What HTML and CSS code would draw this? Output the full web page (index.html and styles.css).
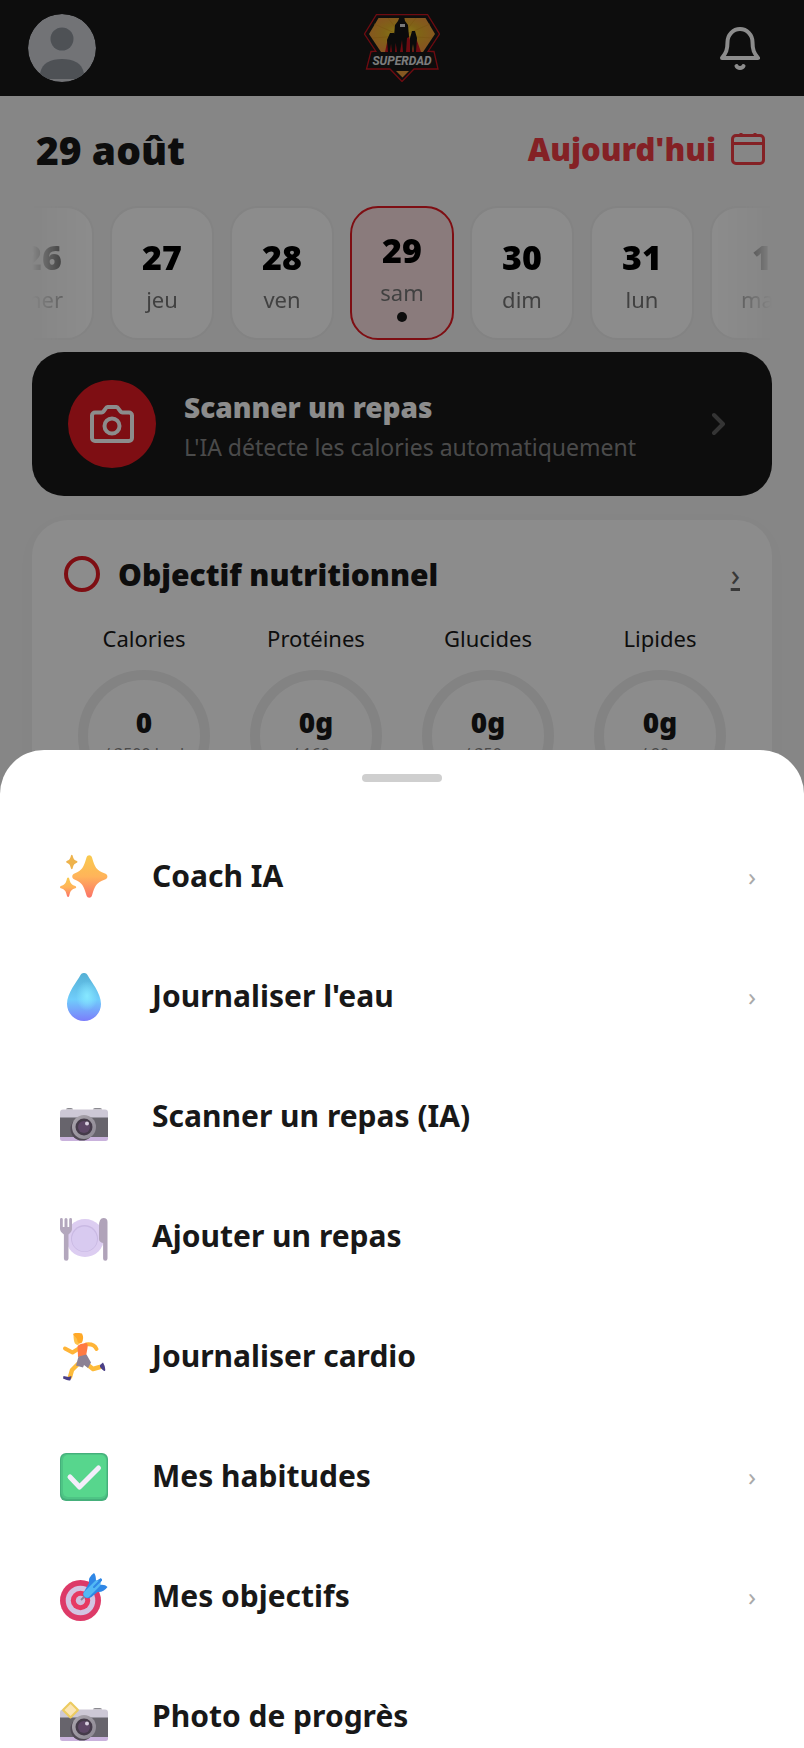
FILE: index.html
```html
<!DOCTYPE html>
<html lang="fr">
<head>
    <meta charset="UTF-8">
    <meta name="viewport" content="width=device-width, initial-scale=1.0">
    <title>SuperDad</title>
    <link rel="stylesheet" href="styles.css">
</head>
<body>

    <header class="topbar">
        <button class="avatar" aria-label="Profil">
            <svg viewBox="0 0 68 68">
                <circle cx="34" cy="34" r="34" fill="#cfd1d8"/>
                <circle cx="34" cy="25" r="11.5" fill="#8e949c"/>
                <path d="M12 59.5c2-11 11-14.5 22-14.5s20 3.500 22 14.500l-3 5.500H15z" fill="#8e949c"/>
            </svg>
        </button>
        <svg class="logo" viewBox="0 0 76 68">
            <defs>
                <radialGradient id="sun" cx="50%" cy="45%" r="55%">
                    <stop offset="0" stop-color="#ffe92e"/>
                    <stop offset=".5" stop-color="#eab52a"/>
                    <stop offset="1" stop-color="#f49a3c"/>
                </radialGradient>
            </defs>
            <path d="M12.5 .5h51L75.500 20 64 37.500h6l4 17.500H50L38 67.500 26 55H2.500L7 37.500h5L.500 20z" fill="#181818" stroke="#c9141f" stroke-width="1.3"/>
            <path d="M14.5 4h47L71 20 59 38H17L5 20z" fill="url(#sun)"/>
            <path d="M38 22L10 10M38 22L24 4M38 22L52 4M38 22l28-12M38 22L8 24M38 22l30 2" stroke="#dd9a22" stroke-width=".6"/>
            <path d="M32 57h13l-6.500 6.500z" fill="#f0a03c"/>
            <path d="M33 14l-6 24h22l-6-24zM24 24l-3 14h10zM52 24l-3 14h8z" fill="#c9141f"/>
            <path d="M36 2h4l1 5 3 4 1 12-2 1-1 14h-3l-1-12-2 12h-3l-2-14-1-2 1-11 3-4zM26 19h4l2 6-1 13h-3l-1-8-1 8h-2l-1-12zM48 17h3l2 7-1 14h-2l-1-8-1 8h-2V24z" fill="#151515"/>
            <path d="M36 10h5v3h-5z" fill="#ddd"/>
            <path d="M9 38h58l4 16H5z" fill="#181818"/>
            <text x="38" y="51" class="logo-text">SUPERDAD</text>
        </svg>
        <button class="bell" aria-label="Notifications">
            <svg viewBox="0 0 40 44">
                <path d="M2 32C6 27 7.500 24 7.500 16a12.500 13 0 0 1 25 0c0 8 1.500 11 5.500 16z"/>
                <path d="M16.500 40c1 2.500 6 2.500 7 0"/>
            </svg>
        </button>
    </header>

    <main class="page">
        <div class="date-row">
            <h1>29 août</h1>
            <button class="today">
                Aujourd'hui
                <svg viewBox="0 0 34 32">
                    <rect x="1.5" y="2.5" width="31" height="28" rx="3.5"/>
                    <path d="M2 10.500h30M10 0v4M24 0v4"/>
                </svg>
            </button>
        </div>

        <div class="days">
            <button class="day"><b>26</b><span>mer</span></button>
            <button class="day"><b>27</b><span>jeu</span></button>
            <button class="day"><b>28</b><span>ven</span></button>
            <button class="day active"><b>29</b><span>sam</span><i class="dot"></i></button>
            <button class="day"><b>30</b><span>dim</span></button>
            <button class="day"><b>31</b><span>lun</span></button>
            <button class="day"><b>1</b><span>mar</span></button>
        </div>

        <button class="scan">
            <span class="scan-icon">
                <svg viewBox="0 0 44 38">
                    <path d="M5 7.500h6.500c2.500 0 4-5.500 6-5.500h9c2 0 3.500 5.500 6 5.500H39a3 3 0 0 1 3 3V33a3 3 0 0 1-3 3H5a3 3 0 0 1-3-3V10.500a3 3 0 0 1 3-3z"/>
                    <circle cx="22" cy="21" r="7.5"/>
                </svg>
            </span>
            <span class="scan-text">
                <strong>Scanner un repas</strong>
                <small>L'IA détecte les calories automatiquement</small>
            </span>
            <svg class="scan-arrow" viewBox="0 0 14 24"><path d="M2 3l9 9-9 9"/></svg>
        </button>

        <section class="card">
            <div class="card-head">
                <span class="ring"></span>
                <h2>Objectif nutritionnel</h2>
                <a href="#" aria-label="Voir le détail">›</a>
            </div>
            <div class="macros">
                <div class="macro"><span>Calories</span><div class="gauge"><b>0</b><small>/ 3500 kcal</small></div></div>
                <div class="macro"><span>Protéines</span><div class="gauge"><b>0g</b><small>/ 160g</small></div></div>
                <div class="macro"><span>Glucides</span><div class="gauge"><b>0g</b><small>/ 350g</small></div></div>
                <div class="macro"><span>Lipides</span><div class="gauge"><b>0g</b><small>/ 90g</small></div></div>
            </div>
        </section>
    </main>

    <div class="overlay">
        <div class="sheet">
            <div class="handle"></div>
            <nav class="menu">
                <button>
                    <svg viewBox="0 0 48 48">
                        <defs>
                            <linearGradient id="spark" x1="0" y1="0" x2="0" y2="1">
                                <stop offset="0" stop-color="#f8ca4e"/>
                                <stop offset=".5" stop-color="#ffb45a"/>
                                <stop offset="1" stop-color="#fb7268"/>
                            </linearGradient>
                        </defs>
                        <path fill="url(#spark)" d="M26.500 4.500c1-3 4.500-3 5.500 0 3 10 4 12.500 13 16 3.200 1.200 3.200 4.800 0 6-9 3.500-10 6-13 16-1 3-4.500 3-5.500 0-3-10-4-12.500-12-16-3-1.200-3-4.800 0-6 8-3.500 9-6 12-16z"/>
                        <path fill="#eeb34c" d="M11 2.500c.4-1 1.200-1 1.600 0 1 3.700 1.500 4.300 4.200 5.500 1 .5 1 1.300 0 1.700-2.700 1.200-3.200 2-4.200 5.800-.4 1-1.200 1-1.600 0-1-3.800-1.500-4.600-4.200-5.800-1-.4-1-1.200 0-1.700C9.500 6.800 10 6.200 11 2.500z"/>
                        <path fill="url(#spark)" d="M7 25.500c.5-1.300 1.700-1.300 2.200 0 1.200 5 2 6 6.100 7.500 1.200.5 1.200 1.800 0 2.300-4.100 1.500-4.900 2.500-6.100 7.700-.5 1.300-1.700 1.300-2.200 0-1.200-5.200-2-6.200-6.100-7.700-1.200-.5-1.200-1.800 0-2.300C5 31.500 5.800 30.500 7 25.500z"/>
                    </svg>
                    <span>Coach IA</span><i>›</i>
                </button>
                <button>
                    <svg viewBox="0 0 48 48">
                        <defs>
                            <linearGradient id="drop" x1="0" y1="0" x2="0" y2="1">
                                <stop offset="0" stop-color="#55b0d4"/>
                                <stop offset=".55" stop-color="#70cdfb"/>
                                <stop offset="1" stop-color="#7b7dfb"/>
                            </linearGradient>
                            <radialGradient id="shine">
                                <stop offset="0" stop-color="#86e8ff"/>
                                <stop offset="1" stop-color="#86e8ff" stop-opacity="0"/>
                            </radialGradient>
                        </defs>
                        <path fill="url(#drop)" d="M20.500 2c1.500-2.700 5.500-2.700 7 0 3.500 6.500 13.500 18 13.500 29a17 17 0 0 1-34 0C7 20 17 8.500 20.500 2z"/>
                        <ellipse cx="27" cy="23" rx="11" ry="15" fill="url(#shine)"/>
                    </svg>
                    <span>Journaliser l'eau</span><i>›</i>
                </button>
                <button>
                    <svg viewBox="0 0 48 48">
                        <defs>
                            <linearGradient id="lens" x1="0" y1="0" x2="1" y2="1">
                                <stop offset="0" stop-color="#aaa5ad"/>
                                <stop offset="1" stop-color="#8c8792"/>
                            </linearGradient>
                            <g id="camera">
                                <path d="M0 19.500a3 3 0 0 1 3-3h42a3 3 0 0 1 3 3V25H0z" fill="#cdc8d6"/>
                                <path d="M0 24.500h48v20H0z" fill="#67646c"/>
                                <path d="M0 44h48v1.500a2.500 2.500 0 0 1-2.500 2.500h-43A2.500 2.500 0 0 1 0 45.500z" fill="#c9b2dc"/>
                                <circle cx="22" cy="36" r="11.5" fill="#514a55"/>
                                <circle cx="24" cy="34" r="12" fill="url(#lens)"/>
                                <circle cx="24" cy="34" r="8.5" fill="#453b4a"/>
                                <circle cx="24" cy="34" r="6" fill="#5d4766"/>
                                <circle cx="27" cy="30.5" r="2" fill="#d9cfe0"/>
                            </g>
                        </defs>
                        <path d="M6 16.500q0-1.500 2-1.500h3q2 0 2 1.500zM33 16.500q0-1.500 2-1.500h5q2 0 2 1.500z" fill="#8b8a90"/>
                        <use href="#camera"/>
                    </svg>
                    <span>Scanner un repas (IA)</span>
                </button>
                <button>
                    <svg viewBox="0 0 48 48">
                        <circle cx="25" cy="25" r="19" fill="#dccdf1"/>
                        <circle cx="24.5" cy="25.5" r="13.5" fill="#c9b9e3"/>
                        <circle cx="24.5" cy="26" r="12.5" fill="#d8caf0"/>
                        <path d="M0 6.500a1.400 1.400 0 0 1 2.800 0V14h1.700V6.500a1.500 1.500 0 0 1 3 0V14h1.700V6.500a1.400 1.400 0 0 1 2.800 0V16q0 2.500-3.500 5.500v24a2.300 2.300 0 0 1-4.600 0v-24Q0 18.500 0 16z" fill="#b3a7bd"/>
                        <path d="M47.500 9v36.500a2.200 2.200 0 0 1-4.400 0V30q-4.100-1-4.100-4V13q0-8 4.500-8 4 0 4 4z" fill="#b0a3b9"/>
                    </svg>
                    <span>Ajouter un repas</span>
                </button>
                <button>
                    <svg viewBox="0 0 48 48" fill="none" stroke-linecap="round" stroke-linejoin="round">
                        <path d="M28 32l5 4 7-2M18 31l-6 6-2 7" stroke="#fdbb3a" stroke-width="4.5"/>
                        <path d="M26 11.500q8-1 10.500 4.500M18 16l-5.500 3.500L5 15.500" stroke="#ffb437" stroke-width="4"/>
                        <path d="M17.500 13q2-2.500 9-3 1.500 1 1 5l-1.500 8-8 1z" fill="#ff7a42"/>
                        <path d="M18.500 23.500l8-2 4.500 8-3 5.500-4-3-1 2.500-7-2z" fill="#8c8194"/>
                        <path d="M40 32l3-2.500q3 5 2 8.500-1.500.500-5-4zM3.500 43l5 1 3-1-1 4q-1 1.500-7.500-1.500z" fill="#4a3f86"/>
                        <path d="M13.500 2q0 6 1.500 8.500 3 3 5-.500z" fill="#fdc24a"/>
                        <path d="M13 1q2-2 9-.500 2.500 5-.500 9.500-4 1-4.500-3.500L14 3z" fill="#ffa928"/>
                    </svg>
                    <span>Journaliser cardio</span>
                </button>
                <button>
                    <svg viewBox="0 0 48 48">
                        <rect width="48" height="48" rx="6" fill="#45b07b"/>
                        <rect x="1" y="1" width="46" height="45" rx="6" fill="#4ec485"/>
                        <rect x="3" y="2" width="43" height="42" rx="5" fill="#57d68d"/>
                        <path d="M10 24l9.500 10L38.500 15" fill="none" stroke="#f3eefb" stroke-width="5" stroke-linecap="round" stroke-linejoin="round"/>
                    </svg>
                    <span>Mes habitudes</span><i>›</i>
                </button>
                <button>
                    <svg viewBox="0 0 48 48">
                        <circle cx="20.5" cy="27.5" r="20.5" fill="#dd3a68"/>
                        <circle cx="20.5" cy="27.5" r="14.8" fill="#d3c4e2"/>
                        <circle cx="20.5" cy="27.5" r="9.7" fill="#e73a62"/>
                        <circle cx="20.5" cy="27.5" r="4.7" fill="#cfc0de"/>
                        <path d="M21 27l7-7" stroke="#8b7f98" stroke-width="2"/>
                        <path d="M29 10q-1-6 5-10 2 2 2 8l5-3 1 2-3 5q6-1 8.500 2-4 5.500-10 5l-6 5q-5 3-8-1-1-3 1.500-6z" fill="#2f87e6"/>
                        <path d="M27 21L37 11" stroke="#52b9f4" stroke-width="7" stroke-linecap="round"/>
                        <path d="M34 14l7-7" stroke="#2f87e6" stroke-width="2" stroke-linecap="round"/>
                    </svg>
                    <span>Mes objectifs</span><i>›</i>
                </button>
                <button>
                    <svg viewBox="0 0 48 48">
                        <path d="M33 16.500q0-1.500 2-1.500h5q2 0 2 1.500z" fill="#8b8a90"/>
                        <use href="#camera"/>
                        <path d="M9.500 9q1-1 2 0l7 7q1 1 0 2l-7 7q-1 1-2 0l-7-7q-1-1 0-2z" fill="#eccb60"/>
                        <path d="M10.500 11l6 6-6 6-6-6z" fill="#fbe5b4"/>
                    </svg>
                    <span>Photo de progrès</span>
                </button>
            </nav>
        </div>
    </div>

</body>
</html>
```

FILE: styles.css
```css
* {
    box-sizing: border-box;
}

body {
    margin: 0;
    height: 100vh;
    overflow: hidden;
    font-family: 'Noto Sans', 'Open Sans', sans-serif;
    background: #f4f4f4;
    color: #181818;
}

button {
    margin: 0;
    padding: 0;
    border: none;
    background: none;
    font: inherit;
    color: inherit;
    cursor: pointer;
}

svg {
    display: block;
}

h1, h2 {
    margin: 0;
    font-weight: 900;
}

b, strong {
    font-weight: 900;
}

/* Header */
.topbar {
    display: grid;
    grid-template-columns: 1fr auto 1fr;
    align-items: center;
    height: 96px;
    padding: 0 28px;
    background: #181818;
}

.avatar {
    width: 68px;
    height: 68px;
    border-radius: 50%;
    overflow: hidden;
}

.logo {
    width: 76px;
    height: 68px;
}

.logo-text {
    font: italic bold 12px 'Roboto', sans-serif;
    text-anchor: middle;
    fill: #e4e4e4;
}

.bell {
    justify-self: end;
    margin-right: 16px;
}

.bell svg {
    width: 40px;
    height: 44px;
    fill: none;
    stroke: #fff;
    stroke-width: 4;
    stroke-linecap: round;
    stroke-linejoin: round;
}

/* Date */
.page {
    padding: 0 32px;
}

.date-row {
    display: flex;
    justify-content: space-between;
    align-items: center;
    height: 110px;
    padding: 0 7px 4px 4px;
}

.date-row h1 {
    font-size: 39px;
}

.today {
    display: flex;
    align-items: center;
    gap: 15px;
    font-size: 31px;
    font-weight: 900;
    color: #f03c44;
}

.today svg {
    width: 34px;
    height: 32px;
    fill: none;
    stroke: #f03c44;
    stroke-width: 3;
}

.days {
    display: flex;
    justify-content: center;
    gap: 16px;
    overflow: hidden;
    -webkit-mask-image: linear-gradient(to right, transparent, #000 8%, #000 92%, transparent);
    mask-image: linear-gradient(to right, transparent, #000 8%, #000 92%, transparent);
}

.day {
    flex: 0 0 104px;
    display: flex;
    flex-direction: column;
    align-items: center;
    justify-content: center;
    height: 134px;
    padding-top: 8px;
    border: 2px solid #eee;
    border-radius: 28px;
    background: #fff;
}

.day b {
    font-size: 34px;
    line-height: 44px;
    color: #000;
}

.day span {
    font-size: 22px;
    line-height: 40px;
    color: #777;
}

.day.active {
    padding-top: 4px;
    border-color: #e51b23;
    background: #fce0e2;
}

.dot {
    width: 10px;
    height: 10px;
    border-radius: 50%;
    background: #181818;
}

/* Scanner */
.scan {
    display: flex;
    align-items: center;
    width: 100%;
    height: 144px;
    margin-top: 12px;
    padding: 0 46px 0 36px;
    border-radius: 32px;
    background: #181818;
    text-align: left;
}

.scan-icon {
    display: flex;
    align-items: center;
    justify-content: center;
    width: 88px;
    height: 88px;
    border-radius: 50%;
    background: #e51b23;
}

.scan-icon svg {
    width: 44px;
    height: 38px;
    fill: none;
    stroke: #fff;
    stroke-width: 4;
    stroke-linejoin: round;
}

.scan-text {
    flex: 1;
    display: flex;
    flex-direction: column;
    margin-left: 28px;
    padding-top: 6px;
}

.scan-text strong {
    font-size: 28px;
    line-height: 40px;
    color: #fff;
}

.scan-text small {
    font-size: 23px;
    line-height: 40px;
    color: #888;
}

.scan-arrow {
    width: 14px;
    height: 24px;
    fill: none;
    stroke: #606060;
    stroke-width: 4;
    stroke-linecap: round;
    stroke-linejoin: round;
}

/* Nutrition */
.card {
    margin-top: 24px;
    padding: 32px;
    border-radius: 36px;
    background: #fff;
    box-shadow: 0 4px 24px rgba(0, 0, 0, 0.02);
}

.card-head {
    display: flex;
    align-items: center;
    height: 44px;
}

.ring {
    width: 36px;
    height: 36px;
    border: 4px solid #e51b23;
    border-radius: 50%;
}

.card-head h2 {
    flex: 1;
    margin-left: 18px;
    font-size: 30px;
}

.card-head a {
    font-size: 30px;
    color: #666;
}

.macros {
    display: grid;
    grid-template-columns: repeat(4, 1fr);
    gap: 12px;
    margin-top: 22px;
}

.macro {
    display: flex;
    flex-direction: column;
    align-items: center;
    font-size: 22px;
    line-height: 40px;
}

.gauge {
    display: flex;
    flex-direction: column;
    align-items: center;
    justify-content: center;
    width: 132px;
    height: 132px;
    margin-top: 12px;
    border: 10px solid #efefef;
    border-radius: 50%;
}

.gauge b {
    font-size: 28px;
    line-height: 32px;
}

.gauge small {
    margin-top: 4px;
    font-size: 16px;
    line-height: 24px;
    color: #888;
}

/* Bottom sheet */
.overlay {
    position: fixed;
    inset: 0;
    display: flex;
    flex-direction: column;
    justify-content: flex-end;
    background: rgba(0, 0, 0, 0.45);
}

.sheet {
    flex: 0 0 57.1%;
    overflow: hidden;
    border-radius: 44px 44px 0 0;
    background: #fff;
}

.handle {
    width: 80px;
    height: 8px;
    margin: 24px auto 35px;
    border-radius: 4px;
    background: #cfcfcf;
}

.menu button {
    display: flex;
    align-items: center;
    gap: 44px;
    width: 100%;
    height: 120px;
    padding: 0 48px 0 60px;
    text-align: left;
}

.menu svg {
    width: 48px;
    height: 48px;
}

.menu span {
    flex: 1;
    padding-bottom: 2px;
    font-size: 30px;
    font-weight: 700;
}

.menu i {
    padding-bottom: 2px;
    font-size: 26px;
    font-style: normal;
    color: #aaa;
}
```
